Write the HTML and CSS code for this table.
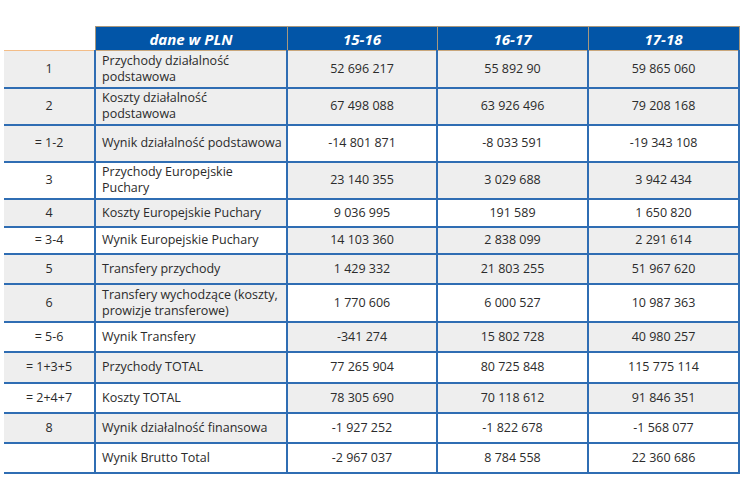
FILE: index.html
```html
<!DOCTYPE html>
<html lang="pl">
<head>
<meta charset="utf-8">
<link rel="stylesheet" href="styles.css">
</head>
<body>
<table class="fin">
  <colgroup>
    <col class="c-idx"><col class="c-lab"><col class="c-num"><col class="c-num2"><col class="c-num2">
  </colgroup>
  <thead>
    <tr class="head">
      <th class="blank"></th>
      <th>dane w PLN</th>
      <th>15-16</th>
      <th>16-17</th>
      <th>17-18</th>
    </tr>
  </thead>
  <tbody>
    <tr class="h37 first">
      <td class="idx g">1</td><td class="lab g">Przychody działalność podstawowa</td>
      <td class="g">52 696 217</td><td class="g">55 892 90</td><td class="g">59 865 060</td>
    </tr>
    <tr class="h37">
      <td class="idx g">2</td><td class="lab g">Koszty działalność podstawowa</td>
      <td class="g">67 498 088</td><td class="g">63 926 496</td><td class="g">79 208 168</td>
    </tr>
    <tr class="h37">
      <td class="idx g">= 1-2</td><td class="lab g nowrap">Wynik działalność podstawowa</td>
      <td>-14 801 871</td><td>-8 033 591</td><td>-19 343 108</td>
    </tr>
    <tr class="h37">
      <td class="idx">3</td><td class="lab">Przychody Europejskie Puchary</td>
      <td class="g">23 140 355</td><td class="g">3 029 688</td><td class="g">3 942 434</td>
    </tr>
    <tr class="h28">
      <td class="idx g">4</td><td class="lab g">Koszty Europejskie Puchary</td>
      <td>9 036 995</td><td>191 589</td><td>1 650 820</td>
    </tr>
    <tr class="h27">
      <td class="idx">= 3-4</td><td class="lab">Wynik Europejskie Puchary</td>
      <td class="g">14 103 360</td><td class="g">2 838 099</td><td class="g">2 291 614</td>
    </tr>
    <tr class="h30">
      <td class="idx g">5</td><td class="lab g">Transfery przychody</td>
      <td class="g">1 429 332</td><td class="g">21 803 255</td><td class="g">51 967 620</td>
    </tr>
    <tr class="h38">
      <td class="idx g">6</td><td class="lab g">Transfery wychodzące (koszty, prowizje transferowe)</td>
      <td>1 770 606</td><td>6 000 527</td><td>10 987 363</td>
    </tr>
    <tr class="h30">
      <td class="idx">= 5-6</td><td class="lab">Wynik Transfery</td>
      <td class="g">-341 274</td><td class="g">15 802 728</td><td class="g">40 980 257</td>
    </tr>
    <tr class="h31">
      <td class="idx g">= 1+3+5</td><td class="lab g">Przychody TOTAL</td>
      <td>77 265 904</td><td>80 725 848</td><td>115 775 114</td>
    </tr>
    <tr class="h30">
      <td class="idx">= 2+4+7</td><td class="lab">Koszty TOTAL</td>
      <td class="g">78 305 690</td><td class="g">70 118 612</td><td class="g">91 846 351</td>
    </tr>
    <tr class="h30">
      <td class="idx g">8</td><td class="lab g">Wynik działalność finansowa</td>
      <td>-1 927 252</td><td>-1 822 678</td><td>-1 568 077</td>
    </tr>
    <tr class="h30">
      <td class="idx"></td><td class="lab">Wynik Brutto Total</td>
      <td>-2 967 037</td><td>8 784 558</td><td>22 360 686</td>
    </tr>
  </tbody>
</table>
</body>
</html>
```
FILE: styles.css
```css
html, body {
  margin: 0;
  padding: 0;
  background: #ffffff;
}
body {
  padding: 26px 0 0 4px;
  font-family: "Open Sans", "Noto Sans", sans-serif;
  font-size: 12.5px;
  color: #2b2b2b;
}
.fin {
  border-collapse: collapse;
  table-layout: fixed;
  width: 736px;
}
.c-idx { width: 91px; }
.c-lab { width: 192px; }
.c-num { width: 150px; }
.c-num2 { width: 151px; }

.head th {
  height: 23px;
  padding: 0;
  background: #0255a7;
  color: #ffffff;
  font-weight: 700;
  font-style: italic;
  font-size: 15px;
  text-align: center;
  border: 1px solid #a8977c;
  border-bottom: 1px solid #c9a77c;
  line-height: 20px;
}
.head th.blank {
  background: transparent;
  border: none;
  border-bottom: 1px solid #f3bd88;
}

.fin td {
  padding: 0 6px;
  border: 2px solid #2f6db3;
  text-align: center;
  line-height: 16px;
  background: #ffffff;
}
.fin td.idx {
  border-left: none;
}
.fin tr.first td {
  border-top: 1px solid #2f6db3;
}
.fin tr.first td.idx {
  border-top: 1px solid #f3bd88;
}
.fin td.lab {
  text-align: left;
  padding: 0 6px;
}
.fin td.nowrap {
  white-space: nowrap;
  overflow: hidden;
  padding-right: 0;
}
.fin td.g {
  background: #eeeeee;
}

.h27 { height: 27px; }
.h28 { height: 28px; }
.h30 { height: 30px; }
.h31 { height: 31px; }
.h37 { height: 37px; }
.h38 { height: 38px; }
```
